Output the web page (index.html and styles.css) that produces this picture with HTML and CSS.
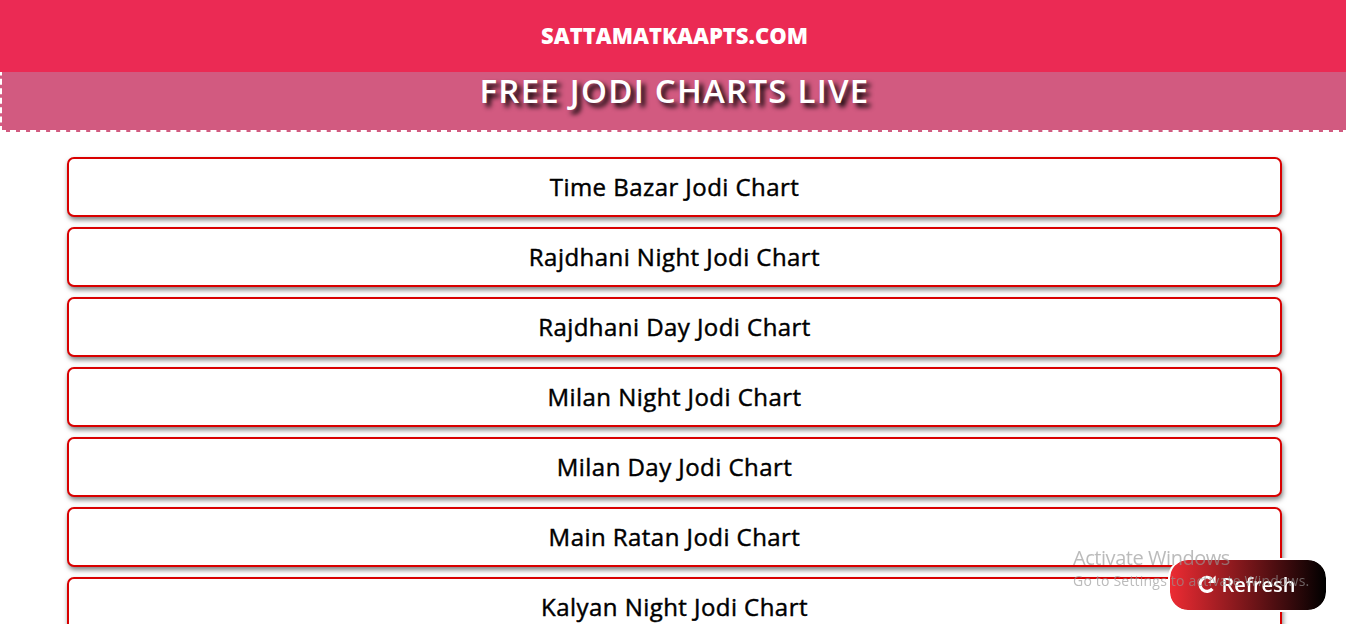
FILE: index.html
```
<!DOCTYPE html>
<html lang="en">
  <head>
    <meta charset="UTF-8" />
    <meta name="viewport" content="width=device-width, initial-scale=1.0"/>
    <title>Free Jodi Charts Live</title>
    <link rel="stylesheet" href="styles.css">
  </head>
  <body>
    <div class="page">
      <header class="header">
        <a class="logo">SATTAMATKAAPTS.COM</a>
      </header>
      <div class="banner">
        <h1>FREE JODI CHARTS LIVE</h1>
      </div>
      <div class="charts">
        <a class="chart">Time Bazar Jodi Chart</a>
        <a class="chart">Rajdhani Night Jodi Chart</a>
        <a class="chart">Rajdhani Day Jodi Chart</a>
        <a class="chart">Milan Night Jodi Chart</a>
        <a class="chart">Milan Day Jodi Chart</a>
        <a class="chart">Main Ratan Jodi Chart</a>
        <a class="chart">Kalyan Night Jodi Chart</a>
      </div>
    </div>

    <button type="button" class="refresh" onclick="location.reload()">
      <svg class="refresh-icon" viewBox="0 0 18 18" aria-hidden="true">
        <path d="M13.4 3.9A7 7 0 1 0 14.4 13.9" fill="none" stroke="#fff" stroke-width="3.2"/>
        <path d="M17.6 0.4V8H10Z" fill="#fff"/>
      </svg>
      <span>Refresh</span>
    </button>

    <div class="activate">
      <p class="activate-title">Activate Windows</p>
      <p class="activate-text">Go to Settings to activate Windows.</p>
    </div>
  </body>
</html>
```

FILE: styles.css
```
* {
  box-sizing: border-box;
}

body {
  margin: 0;
  height: 100vh;
  overflow: hidden;
  background: #fff;
  font-family: 'Open Sans', 'Noto Sans', sans-serif;
}

.page {
  width: 1349px;
}

.header {
  position: relative;
  z-index: 1;
  height: 72px;
  display: flex;
  justify-content: center;
  align-items: center;
  padding-bottom: 2px;
  background: #eb2a54;
}

.logo {
  color: #fff;
  font-size: 22px;
  font-weight: 800;
}

.banner {
  height: 72px;
  margin-top: -12px;
  padding-top: 6px;
  border: 2px dashed #fff;
  background: #d25a80;
  text-align: center;
}

h1 {
  margin: 0;
  color: #fff;
  font-size: 33px;
  font-weight: 600;
  line-height: 45px;
  letter-spacing: 1.25px;
  text-shadow: 4px 4px 5px #000;
}

.charts {
  width: 90%;
  margin: 25px auto 0;
  display: flex;
  flex-direction: column;
  gap: 10px;
}

.chart {
  height: 60px;
  display: flex;
  justify-content: center;
  align-items: center;
  padding-bottom: 2px;
  border: 2px solid #d90000;
  border-radius: 7px;
  background: #fff;
  box-shadow: 1px 3px 5px rgba(0, 0, 0, 0.5);
  color: #000;
  font-size: 24px;
  font-weight: 500;
  letter-spacing: 0.45px;
  -webkit-text-stroke: 0.45px #000;
}

.refresh {
  position: fixed;
  right: 18px;
  bottom: 12px;
  width: 160px;
  height: 54px;
  display: flex;
  justify-content: center;
  align-items: center;
  gap: 5px;
  padding: 0 2px 2px 0;
  border: 2px solid #fff;
  border-radius: 20px;
  background: linear-gradient(to right, #ed2b33, #000) padding-box;
  color: #fff;
  font-family: inherit;
  font-size: 20px;
  font-weight: 600;
  cursor: pointer;
}

.refresh-icon {
  width: 18px;
  height: 18px;
}

.activate {
  position: fixed;
  left: 1073px;
  top: 545px;
  color: rgba(150, 150, 150, 0.65);
  white-space: nowrap;
  pointer-events: none;
}

.activate p {
  margin: 0;
}

.activate-title {
  font-size: 20px;
  line-height: 26px;
  letter-spacing: -0.45px;
}

.activate-text {
  font-size: 14px;
  line-height: 19px;
  letter-spacing: 0.2px;
}
```
